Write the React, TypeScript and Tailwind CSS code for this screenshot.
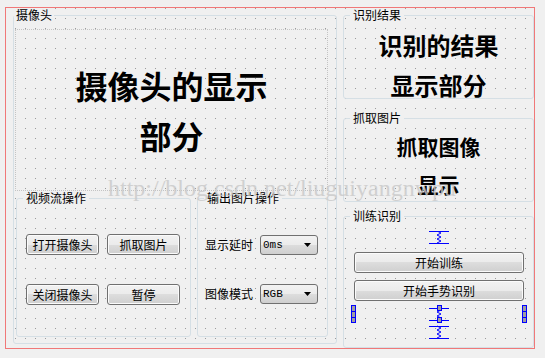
import React from "react";

const FONT = "font-['Noto_Sans_CJK_SC','Noto_Sans',sans-serif]";
const BTN =
  "h-[21px] border border-[#707070] rounded-[3px] bg-[linear-gradient(#f2f2f2_0%,#ebebeb_50%,#dddddd_50%,#cfcfcf_100%)] text-[12px] leading-[19px] text-black text-center shadow-[inset_0_0_0_1px_#fbfbfb]";

function GroupBox({
  title,
  className = "",
  legendClass = "",
  children,
}: {
  title: string;
  className?: string;
  legendClass?: string;
  children?: React.ReactNode;
}) {
  return (
    <fieldset className={`border border-[#d5dfe5] rounded-[3px] min-w-0 ${className}`}>
      <legend className={`text-[12px] leading-[14px] px-[2px] bg-[#f0f0f0] text-black ${legendClass}`}>{title}</legend>
      {children}
    </fieldset>
  );
}

function Combo({ value }: { value: string }) {
  return (
    <div className="w-[58px] h-[20px] border border-[#707070] rounded-[3px] bg-[linear-gradient(#f2f2f2_0%,#ebebeb_50%,#dddddd_50%,#cfcfcf_100%)] flex items-center justify-between pl-[2px] pr-[6px]">
      <span className="font-['Liberation_Mono',monospace] text-[11px] leading-[12px] text-black">{value}</span>
      <svg width="7" height="4" viewBox="0 0 7 4">
        <polygon points="0,0 7,0 3.5,4" fill="#000" />
      </svg>
    </div>
  );
}

function Spring({ y1, y2 }: { y1: number; y2: number }) {
  const pts: string[] = [];
  const steps = 6;
  for (let i = 0; i <= steps; i++) {
    const y = y1 + ((y2 - y1) * i) / steps;
    pts.push(`${i % 2 === 0 ? 8 : 12},${y}`);
  }
  return (
    <>
      <line x1="0" y1={y1 + 0.5} x2="20" y2={y1 + 0.5} stroke="#0000ff" strokeWidth="1" />
      <polyline points={pts.join(" ")} fill="none" stroke="#0000ff" strokeWidth="1" />
      <line x1="0" y1={y2 + 0.5} x2="20" y2={y2 + 0.5} stroke="#0000ff" strokeWidth="1" />
    </>
  );
}

function Handle() {
  return (
    <svg width="5" height="18" viewBox="0 0 5 18">
      <rect x="0.5" y="0.5" width="4" height="17" fill="#a0a0a0" stroke="#0000ff" />
      <line x1="0" y1="6.5" x2="5" y2="6.5" stroke="#0000ff" />
      <line x1="0" y1="12.5" x2="5" y2="12.5" stroke="#0000ff" />
    </svg>
  );
}

export default function App() {
  return (
    <div className={`relative w-[545px] h-[358px] bg-[#f0f0f0] pl-[5px] pt-[7px] ${FONT}`}>
      <div className="w-[530px] h-[342px] border border-[#f07878] flex bg-[image:conic-gradient(at_1px_1px,transparent_270deg,#9a9a9a_270deg)] bg-[length:10px_10px] bg-[position:9px_0px]">
        {/* Left: camera group */}
        <GroupBox title="摄像头" className="ml-[7px] w-[324px] h-[336px] shrink-0" legendClass="ml-0">
          <div className="flex flex-col pl-px pr-[8px]">
            <div className="mt-[7px] w-[313px] h-[162px] border border-dotted border-[#c4c4c4] flex flex-col items-center justify-center text-[32px] leading-[50px] font-bold text-black">
              <div>摄像头的显示</div>
              <div>部分</div>
            </div>
            <div className="flex gap-[6px] pl-px">
              <GroupBox title="视频流操作" className="w-[175px] h-[146px]" legendClass="ml-[6px] px-[3px]">
                <div className="grid grid-cols-[73px_73px] gap-x-[8px] gap-y-[29px] pl-[9px] pt-[29px]">
                  <div className={BTN}>打开摄像头</div>
                  <div className={BTN}>抓取图片</div>
                  <div className={BTN}>关闭摄像头</div>
                  <div className={BTN}>暂停</div>
                </div>
              </GroupBox>
              <GroupBox title="输出图片操作" className="w-[131px] h-[146px]" legendClass="ml-[6px] px-[3px]">
                <div className="flex flex-col gap-[29px] pl-[7px] pt-[30px]">
                  <div className="flex items-center gap-[7px] text-[12px] text-black">
                    <span>显示延时</span>
                    <Combo value="0ms" />
                  </div>
                  <div className="flex items-center gap-[7px] text-[12px] text-black">
                    <span>图像模式</span>
                    <Combo value="RGB" />
                  </div>
                </div>
              </GroupBox>
            </div>
          </div>
        </GroupBox>

        {/* Right column */}
        <div className="ml-[6px] w-[191px] flex flex-col">
          <GroupBox title="识别结果" className="w-[191px] h-[91px]" legendClass="ml-[6px] px-[3px]">
            <div className="flex flex-col items-center gap-[12px] pt-[9px] text-[24px] leading-[28px] font-bold text-black">
              <div>识别的结果</div>
              <div>显示部分</div>
            </div>
          </GroupBox>
          <GroupBox title="抓取图片" className="mt-[12px] w-[191px] h-[91px]" legendClass="ml-[6px] px-[3px]">
            <div className="flex flex-col items-center gap-[10px] pt-[7px] text-[21px] leading-[28px] font-bold text-black">
              <div>抓取图像</div>
              <div>显示</div>
            </div>
          </GroupBox>
          <GroupBox title="训练识别" className="mt-[7px] w-[191px] h-[139px]" legendClass="ml-[6px] px-[3px]">
            <div className="flex flex-col">
              <div className="flex justify-center pt-[8px]">
                <svg width="20" height="13" viewBox="0 0 20 13">
                  <Spring y1={0} y2={12} />
                </svg>
              </div>
              <div className={`${BTN} mt-[8px] ml-[10px] w-[170px]`}>开始训练</div>
              <div className={`${BTN} mt-[7px] ml-[10px] w-[170px]`}>开始手势识别</div>
              <div className="flex justify-between items-start mt-[4px] pl-[7px] pr-[6px]">
                <Handle />
                <svg width="20" height="34" viewBox="0 0 20 34">
                  <Spring y1={3} y2={15} />
                  <Spring y1={21} y2={33} />
                  <rect x="8.5" y="0.5" width="4" height="5" fill="#a0a0a0" stroke="#0000ff" />
                  <rect x="8.5" y="12.5" width="4" height="5" fill="#a0a0a0" stroke="#0000ff" />
                </svg>
                <Handle />
              </div>
            </div>
          </GroupBox>
        </div>
      </div>

      {/* Watermark */}
      <div className="absolute left-[108px] top-[176px] font-['Liberation_Serif',serif] text-[24px] leading-[24px] text-[#c9c9c9] opacity-80 pointer-events-none whitespace-nowrap">
        http://blog.csdn.net/liuguiyangnwpu
      </div>
    </div>
  );
}
